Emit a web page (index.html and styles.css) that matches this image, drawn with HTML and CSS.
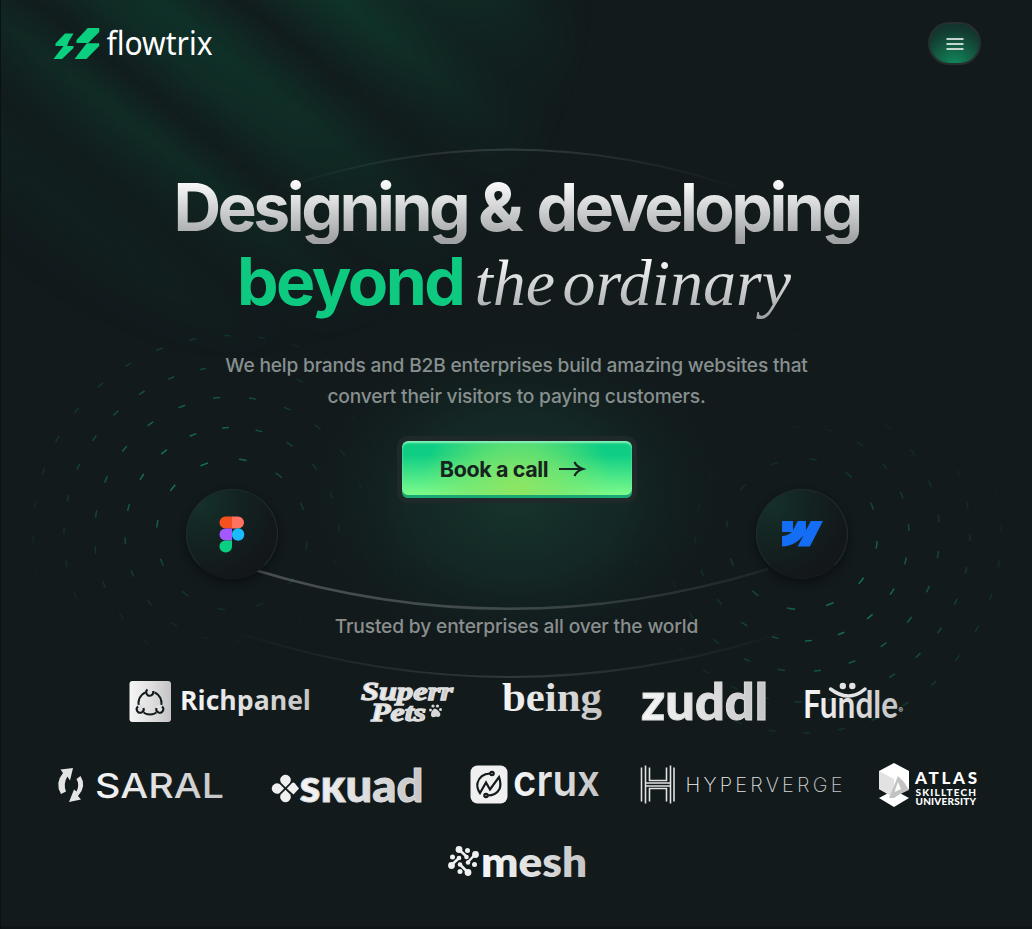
FILE: index.html
```html
<!DOCTYPE html>
<html lang="en">
<head>
<meta charset="utf-8">
<title>Flowtrix</title>
<link rel="stylesheet" href="styles.css">
</head>
<body>
<svg class="backdrop" viewBox="0 0 1032 929" aria-hidden="true">
  <defs>
    <linearGradient id="beam" gradientUnits="userSpaceOnUse" x1="-300" y1="0" x2="53" y2="-445">
      <stop offset="0" stop-color="#0b5a3e" stop-opacity=".05"/>
      <stop offset=".11" stop-color="#0b5a3e" stop-opacity=".3"/>
      <stop offset=".19" stop-color="#0b5a3e" stop-opacity=".06"/>
      <stop offset=".3" stop-color="#0b5a3e" stop-opacity=".42"/>
      <stop offset=".365" stop-color="#0b5a3e" stop-opacity=".06"/>
      <stop offset=".44" stop-color="#0b5a3e" stop-opacity=".36"/>
      <stop offset=".5" stop-color="#0b5a3e" stop-opacity=".42"/>
      <stop offset=".59" stop-color="#0b5a3e" stop-opacity=".04"/>
      <stop offset=".7" stop-color="#0b5a3e" stop-opacity=".5"/>
      <stop offset=".78" stop-color="#0b5a3e" stop-opacity=".3"/>
      <stop offset=".88" stop-color="#0b5a3e" stop-opacity=".6"/>
      <stop offset="1" stop-color="#0b5a3e" stop-opacity="0"/>
    </linearGradient>
    <radialGradient id="beamFade" gradientUnits="userSpaceOnUse" cx="0" cy="0" r="1" gradientTransform="translate(230 -60) scale(370 420)">
      <stop offset="0" stop-color="#fff"/><stop offset=".5" stop-color="#b0b0b0"/><stop offset="1" stop-color="#000"/>
    </radialGradient>
    <mask id="beamMask"><rect width="620" height="400" fill="url(#beamFade)"/></mask>
    <radialGradient id="glow">
      <stop offset="0" stop-color="#16352d"/><stop offset=".5" stop-color="#142a26" stop-opacity=".8"/><stop offset="1" stop-color="#121a1c" stop-opacity="0"/>
    </radialGradient>
    <radialGradient id="ringFade" gradientUnits="userSpaceOnUse" cx="-45" cy="-65" r="190">
      <stop offset="0" stop-color="#c8c8c8"/><stop offset=".3" stop-color="#909090"/><stop offset=".65" stop-color="#3a3a3a"/><stop offset="1" stop-color="#080808"/>
    </radialGradient>
    <mask id="ringMask" maskUnits="userSpaceOnUse" x="-210" y="-210" width="420" height="420"><rect x="-210" y="-210" width="420" height="420" fill="url(#ringFade)"/></mask>
    <linearGradient id="arc"><stop offset="0" stop-color="#fff" stop-opacity="0"/><stop offset=".5" stop-color="#fff" stop-opacity=".14"/><stop offset="1" stop-color="#fff" stop-opacity="0"/></linearGradient>
    <linearGradient id="arcStrong"><stop offset="0" stop-color="#fff" stop-opacity=".24"/><stop offset=".5" stop-color="#fff" stop-opacity=".19"/><stop offset="1" stop-color="#fff" stop-opacity=".05"/></linearGradient>
    <g id="rings" mask="url(#ringMask)" fill="none" stroke="#169a6e" stroke-width="1.5">
      <circle r="75.5" pathLength="12" stroke-dasharray=".2 .8" transform="rotate(-84.7)"/>
      <circle r="107" pathLength="20" stroke-dasharray=".21 .79" transform="rotate(-95.3)"/>
      <circle r="137.5" pathLength="24" stroke-dasharray=".2 .8" transform="rotate(-97.9)"/>
      <circle r="168" pathLength="32" stroke-dasharray=".2 .8" transform="rotate(-101.1)"/>
      <circle r="199" pathLength="36" stroke-dasharray=".2 .8" transform="rotate(-92.4)"/>
    </g>
    <linearGradient id="silver"><stop offset="0" stop-color="#f6f6f6"/><stop offset=".5" stop-color="#e0e0e0"/><stop offset="1" stop-color="#c4c4c4"/></linearGradient>
  </defs>
  <rect width="620" height="400" fill="url(#beam)" mask="url(#beamMask)"/>
  <ellipse cx="516" cy="495" rx="225" ry="170" fill="url(#glow)"/>
  <use href="#rings" transform="translate(232 534.5)"/>
  <use href="#rings" transform="translate(802 534) rotate(180)"/>
  <g fill="none" stroke-width="2">
    <path d="M270 192Q510 107 750 192" stroke="url(#arc)"/>
    <path d="M255 570Q510 648 768 569" stroke="url(#arcStrong)" stroke-width="2.4"/>
    <path d="M220 627Q510 727 800 627" stroke="url(#arc)"/>
  </g>
</svg>

<header class="header">
  <a class="brand">
    <svg viewBox="53 20 162 46" width="162" height="46">
      <g fill="#0acf7f">
        <path d="M65 33.500H73.500L69 41 67 46H55.500V43.500ZM63.500 46H73.500V48L62 59H53.500Z"/>
        <path d="M87.800 28H99.200V32L88.200 43H76.500V40ZM86.700 43.200H99.200V46L86.400 59H74.500Z"/>
      </g>
      <text class="wordmark" x="106.5" y="55" textLength="106" lengthAdjust="spacingAndGlyphs">flowtrix</text>
    </svg>
  </a>
  <button class="menu" aria-label="Menu">
    <svg viewBox="0 0 18 12" width="18" height="12"><path d="M1 1H17M1 6H17M1 11H17"/></svg>
  </button>
</header>

<main>
  <section class="hero">
    <h1 class="title">
      <span class="line"><span class="fade grotesk">Designing <span class="amp">&amp;</span> developing</span></span>
      <span class="line"><span class="accent grotesk">beyond</span><span class="fade serif">the ordinary</span></span>
    </h1>
    <p class="lead">We help brands and B2B enterprises build amazing websites that<br>convert their visitors to paying customers.</p>
    <a class="cta"><span class="cta-label">Book a call</span>
      <svg viewBox="0 0 26 18" width="26" height="18"><path d="M0 9H24M15.500 2Q17.500 7 24 9Q17.500 11 15.500 16"/></svg>
    </a>
    <p class="trusted">Trusted by enterprises all over the world</p>
    <div class="badge badge-figma">
      <svg viewBox="0 0 26 37" width="26" height="37">
        <path d="M6.500.5H13V12.500H6.500A6 6 0 0 1 6.500.5Z" fill="#f4511e"/>
        <path d="M13 .5H19A6 6 0 0 1 19 12.500H13Z" fill="#ff7262"/>
        <path d="M6.500 12.500H13V24.500H6.500A6 6 0 0 1 6.500 12.500Z" fill="#a259ff"/>
        <circle cx="19.100" cy="18.500" r="6.200" fill="#1abcfe"/>
        <path d="M6.500 24.500H13V30.500A6.300 6 0 1 1 6.500 24.500Z" fill="#0acf83"/>
      </svg>
    </div>
    <div class="badge badge-webflow">
      <svg viewBox="0 0 1080 674" width="41" height="25.500"><path fill="#146ef5" d="M1080 0 735.400 673.700H411.700L556.400 393.600H549.900C430.500 548.600 252.400 650.600 0 673.700V397.400S161.600 387.800 256.600 288H0V0H288.400V237.200L294.900 237.170 412.700 0H630.800V235.700L637.300 235.690 759.500 0Z"/></svg>
    </div>
  </section>

  <section class="logos">
    <div class="row">
      <svg viewBox="129 671 192 60" width="192" height="60">
        <rect x="129.500" y="681" width="41.500" height="41" rx="3" fill="url(#silver)"/>
        <g fill="none" stroke="#121a1c" stroke-width="2">
          <circle cx="150" cy="703" r="11.500"/>
          <g fill="#e0e0e0" stroke="none"><circle cx="150" cy="692" r="4.500"/><circle cx="140.500" cy="709" r="4.500"/><circle cx="159.500" cy="709" r="4.500"/></g>
          <path d="M147.500 689.500A3.500 3.500 0 1 0 153 691M138 706.500A3.500 3.500 0 1 0 143.500 708M162 706.500A3.500 3.500 0 1 1 156.500 708"/>
        </g>
        <text class="t-rich" x="180" y="709.500" textLength="131" lengthAdjust="spacingAndGlyphs">Richpanel</text>
      </svg>
      <svg viewBox="360 671 103 60" width="103" height="60">
        <g class="t-pets">
          <text x="361" y="699.500" textLength="92" lengthAdjust="spacingAndGlyphs">Superr</text>
          <text x="371" y="720.500" textLength="55" lengthAdjust="spacingAndGlyphs">Pets</text>
        </g>
        <g fill="#d8d8d8"><path d="M434.500 708.500Q438 709 440.500 714Q440 718 436 716.500Q431 718.500 431 714.500Q431 711 434.500 708.500Z"/><circle cx="430.500" cy="710" r="1.500"/><circle cx="433" cy="706" r="1.600"/><circle cx="437.500" cy="706" r="1.600"/><circle cx="440.500" cy="709.500" r="1.500"/></g>
      </svg>
      <svg viewBox="502 671 101 60" width="101" height="60">
        <text class="t-being" x="502" y="710.500" textLength="100" lengthAdjust="spacingAndGlyphs">being</text>
      </svg>
      <svg viewBox="642 671 123 60" width="123" height="60">
        <text class="t-zuddl" x="641" y="719.500" textLength="127" lengthAdjust="spacingAndGlyphs">zuddl</text>
      </svg>
      <svg viewBox="804 671 101 60" width="101" height="60">
        <text class="t-fundle" x="803" y="717.500" textLength="95" lengthAdjust="spacingAndGlyphs">Fundle</text>
        <path d="M830.500 689Q849 703 865 689" fill="none" stroke="#e4e4e4" stroke-width="3.500" stroke-linecap="round"/>
        <circle cx="842.800" cy="686" r="3.200" fill="#e4e4e4"/><circle cx="852.300" cy="686" r="3.200" fill="#e4e4e4"/>
        <text class="t-reg" x="898.500" y="713">®</text>
      </svg>
    </div>
    <div class="row">
      <svg viewBox="57 755 176 60" width="176" height="60">
        <g fill="#e4e4e4"><path d="M60.500 769.500 73 768 70 780.500 67.300 776.500Q63 784 66 791.500L61 794Q54.500 783 63 773Z"/><path d="M80.500 776 76.500 779Q80 785 76.500 791.500L74 789.500 69 802 81 799.500 78 796Q87 786 80.500 776Z"/></g>
        <text class="t-saral" x="95" y="797.500" textLength="129" lengthAdjust="spacingAndGlyphs">SARAL</text>
      </svg>
      <svg viewBox="272 755 159 60" width="159" height="60">
        <g fill="#f0f0f0" transform="translate(285.500 788.500)">
          <path id="petal" d="M0 -1.300 -4.500 -5.800A5.200 5.200 0 1 1 4.500 -5.800Z"/>
          <path transform="rotate(-90)" d="M0 -1.300 -4.500 -5.800A5.200 5.200 0 1 1 4.500 -5.800Z"/>
          <path transform="rotate(180)" d="M0 -1.300 -4.500 -5.800A5.200 5.200 0 1 1 4.500 -5.800Z"/>
          <path d="M1.300 0 6.500 -5.500Q8 -6.500 9.500 -5L13.500 0 8 6Z"/>
        </g>
        <text class="t-skuad" x="299.500" y="801.500" textLength="124" lengthAdjust="spacingAndGlyphs">sᴋuad</text>
      </svg>
      <svg viewBox="470 755 131 60" width="131" height="60">
        <rect x="470.500" y="765.500" width="37" height="38" rx="7" fill="#f0f0f0"/>
        <g fill="none" stroke="#121a1c" stroke-width="2.200">
          <path d="M490 773.500Q480 774 477.500 783Q476.500 788 480 793L486 782.500 490 789.500 499 777Q501.500 784 499.500 789Q496 795.500 487.500 795.500"/>
          <circle cx="492" cy="773.500" r="1.700"/><circle cx="486" cy="795.500" r="1.700"/>
        </g>
        <text class="t-crux" x="513" y="795.500" textLength="87" lengthAdjust="spacingAndGlyphs">crux</text>
      </svg>
      <svg viewBox="640 755 200 60" width="200" height="60">
        <path d="M641.500 767.500V801.500M645.500 765.500V803.500M649.500 767.500V780.500H666.500V767.500M649.500 801.500V788.500H666.500V801.500M645.500 783H670M645.500 786H670M670.500 765.500V803.500M674 767.500V801.500" fill="none" stroke="#e2e2e2" stroke-width="1.600"/>
        <text class="t-hyper" x="685.500" y="792" textLength="157">HYPERVERGE</text>
      </svg>
      <svg viewBox="879 755 98 60" width="98" height="60">
        <path d="M879 798 894 790 909 798 894 807Z" fill="#fff"/>
        <path d="M894 763 909 771V789L894 797.500 879 789V771Z" fill="#fff"/>
        <path d="M879 771 894 779V797.500L879 789Z" fill="#e2e2e2"/>
        <path d="M889 798 898 776 904 782 909 790 901 793.500 894 798Z" fill="#c3c3c3"/>
        <path d="M894.500 792 898 782 901 789Z" fill="#fff"/>
        <g class="t-atlas">
          <text class="t-atlas-name" x="915" y="784" textLength="62">ATLAS</text>
          <text x="915.500" y="795.500" textLength="60.500">SKILLTECH</text>
          <text x="915.500" y="804.500" textLength="60.500">UNIVERSITY</text>
        </g>
      </svg>
    </div>
    <div class="row row-last">
      <svg viewBox="448 831 138 60" width="138" height="60">
        <g fill="#f0f0f0" stroke="#f0f0f0" stroke-width="2.500">
          <path d="M459 849.500 467 857M475 854.500 468 862M468 872.500 460 864.500M451.500 865 459 858"/>
          <g stroke="none"><circle cx="459" cy="849.500" r="3.400"/><circle cx="475.500" cy="854.500" r="3.400"/><circle cx="468" cy="872.500" r="3.400"/><circle cx="451.500" cy="865.500" r="3.400"/><circle cx="467.500" cy="850.500" r="2.500"/><circle cx="452.500" cy="857" r="2.500"/><circle cx="474.500" cy="864.500" r="2.500"/><circle cx="460" cy="871.500" r="2.500"/><circle cx="466.500" cy="857" r="2.300"/><circle cx="468" cy="862.500" r="2.300"/><circle cx="460" cy="864.500" r="2.300"/><circle cx="459" cy="858" r="2.300"/></g>
        </g>
        <text class="t-mesh" x="481" y="876.500" textLength="106" lengthAdjust="spacingAndGlyphs">mesh</text>
      </svg>
    </div>
  </section>
</main>
</body>
</html>
```
FILE: styles.css
```css
* { box-sizing: border-box; }
body {
  position: relative;
  margin: 0;
  height: 929px;
  overflow: hidden;
  padding-left: 1px;
  background: #121a1c;
  color: #8a9392;
  font-family: Inter, "Liberation Sans", sans-serif;
  box-shadow: inset 1px 0 #0b1011, inset 0 -3px #0f1517;
}
.backdrop { position: absolute; inset: 0; z-index: -1; width: 1032px; height: 929px; }
.header {
  display: flex;
  justify-content: space-between;
  align-items: flex-start;
  height: 170px;
  padding: 20px 51px 0 52px;
}
.brand svg { display: block; overflow: visible; }
.wordmark { font: 400 32px "Noto Sans", sans-serif; fill: #fff; }
.menu {
  display: grid;
  place-items: center;
  width: 53px;
  height: 43px;
  margin-top: 2px;
  padding: 0;
  border: 2px solid #25302f;
  border-radius: 22px;
  background: radial-gradient(circle at 50% 105%, #118a5b 0, #12694a 30%, #133d32 70%, #142a28 100%);
}
.menu path { stroke: #fff; stroke-width: 1.4; stroke-linecap: round; }

.hero { display: flex; flex-direction: column; align-items: center; height: 501px; text-align: center; }
.title { margin: 0; font-size: 66px; line-height: 74px; font-weight: 700; white-space: nowrap; }
.line { display: flex; justify-content: center; height: 74px; }
.grotesk { letter-spacing: -3.5px; word-spacing: 4px; }
.amp { margin: 0 -3px 0 -5px; font-weight: 800; letter-spacing: 0; }
.fade { background: linear-gradient(#fff 12%, #a0a2a4 95%); -webkit-background-clip: text; background-clip: text; color: transparent; }
.accent { margin-right: 13px; letter-spacing: -2.5px; color: #0dca80; }
.serif { height: 74px; margin: 2px 2px 0 -2px; padding-right: 3px; font: italic 400 66px/74px "Liberation Serif", serif; word-spacing: -9px; }
.lead { margin: 32px 0 0; font-size: 19.2px; line-height: 31px; font-weight: 450; letter-spacing: -.2px; color: #87908e; white-space: nowrap; }
.cta {
  display: flex;
  align-items: center;
  justify-content: center;
  gap: 11px;
  width: 230px;
  height: 57px;
  margin-top: 29px;
  padding: 0 8px 2px 0;
  border-radius: 6px;
  background:
    radial-gradient(ellipse 42% 150% at 50% 85%, #8de562 0, #7de66bb0 50%, #7de66b00 100%),
    linear-gradient(#0fce84 25%, #7dfb8b 95%);
  box-shadow: 0 0 0 5px #20292a, inset 0 -3px #18a873, inset 0 2px 2px #8bf0b8;
  color: #16231f;
}
.cta-label { font-size: 21.5px; font-weight: 650; letter-spacing: -.4px; white-space: nowrap; }
.cta svg { overflow: visible; }
.cta path { fill: none; stroke: #16231f; stroke-width: 2.2; }
.trusted { margin: 113px 0 0; font-size: 19.2px; line-height: 31px; font-weight: 450; letter-spacing: -.16px; white-space: nowrap; color: #8a8f8e; }
.badge {
  position: absolute;
  top: 489px;
  display: grid;
  place-items: center;
  width: 92px;
  height: 90px;
  border-radius: 50%;
  border: 1px solid #212c2c;
  border-bottom-color: #151c1e;
  background: radial-gradient(circle at 15% 15%, #15302a 0, #13201f 45%, #131719 75%);
  box-shadow: 0 4px 10px #0006;
}
.badge-figma { left: 186px; }
.badge-webflow { left: 756px; }

.logos { display: flex; flex-direction: column; gap: 24px; }
.row { display: flex; justify-content: center; gap: 39px; height: 60px; padding-left: 1px; }
.row svg { flex: none; overflow: visible; }
.row-last { margin-top: -8px; }
.logos text { fill: url(#silver); }
.t-rich { font: 700 26px "Open Sans", sans-serif; }
.t-pets { font: italic 700 26px "Liberation Serif", serif; }
.t-pets text { stroke: #e0e0e0; stroke-width: 1.3; }
.t-being { font: 700 40px "Liberation Serif", serif; }
.t-zuddl { font: 900 51px Lato, sans-serif; }
.t-fundle { font: 700 38px Lato, sans-serif; }
.t-reg { font: 700 7px Inter, sans-serif; }
.t-saral { font: 500 34px Inter, sans-serif; }
.t-skuad { font: 900 46px Lato, sans-serif; }
.t-skuad, .t-zuddl { stroke: #dcdcdc; stroke-width: 1; }
.t-crux { font: 600 43px Inter, sans-serif; }
.t-hyper { font: 200 20px Inter, sans-serif; }
.t-atlas { font: 900 10px Lato, sans-serif; }
.t-atlas text { fill: #fff; }
.t-atlas .t-atlas-name { font: 900 17px Lato, sans-serif; }
.t-mesh { font: 800 42px Lato, sans-serif; }
```
